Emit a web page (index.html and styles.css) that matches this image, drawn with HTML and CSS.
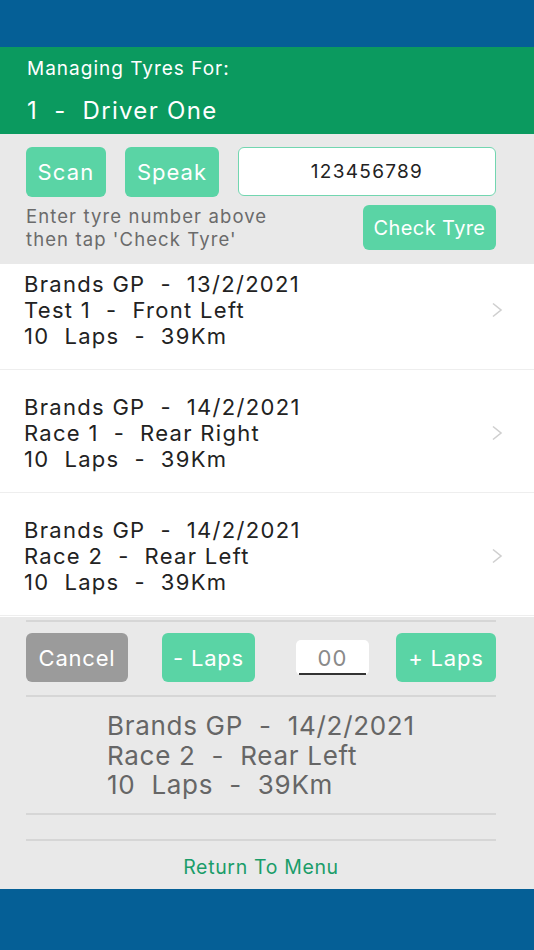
FILE: index.html
```html
<!DOCTYPE html>
<html lang="en">
<head>
<meta charset="utf-8">
<title>Managing Tyres</title>
<link rel="stylesheet" href="styles.css">
</head>
<body>
<div class="app">
  <div class="statusbar"></div>
  <header class="header">
    <div class="header-label">Managing Tyres For:</div>
    <div class="header-driver">1  -  Driver One</div>
  </header>
  <section class="controls">
    <div class="controls-row">
      <button class="btn btn-scan">Scan</button>
      <button class="btn btn-speak">Speak</button>
      <div class="tyre-input">123456789</div>
    </div>
    <div class="controls-row controls-row-second">
      <div class="helper">Enter tyre number above<br>then tap 'Check Tyre'</div>
      <button class="btn btn-check">Check Tyre</button>
    </div>
  </section>
  <section class="list">
    <div class="list-inner">
      <div class="row">
        <div class="row-text">Brands GP  -  13/2/2021
Test 1  -  Front Left
10  Laps  -  39Km</div>
        <svg class="chevron" width="12" height="16" viewBox="0 0 12 16"><polyline points="2,1.5 10,8 2,14.5" fill="none" stroke="#cfcfcf" stroke-width="1.6"/></svg>
      </div>
      <div class="row">
        <div class="row-text">Brands GP  -  14/2/2021
Race 1  -  Rear Right
10  Laps  -  39Km</div>
        <svg class="chevron" width="12" height="16" viewBox="0 0 12 16"><polyline points="2,1.5 10,8 2,14.5" fill="none" stroke="#cfcfcf" stroke-width="1.6"/></svg>
      </div>
      <div class="row">
        <div class="row-text">Brands GP  -  14/2/2021
Race 2  -  Rear Left
10  Laps  -  39Km</div>
        <svg class="chevron" width="12" height="16" viewBox="0 0 12 16"><polyline points="2,1.5 10,8 2,14.5" fill="none" stroke="#cfcfcf" stroke-width="1.6"/></svg>
      </div>
    </div>
  </section>
  <section class="panel">
    <div class="rule rule-top"></div>
    <div class="laps-row">
      <button class="btn btn-cancel">Cancel</button>
      <button class="btn btn-minus">- Laps</button>
      <div class="laps-input">00</div>
      <button class="btn btn-plus">+ Laps</button>
    </div>
    <div class="rule"></div>
    <div class="selected">Brands GP  -  14/2/2021
Race 2  -  Rear Left
10  Laps  -  39Km</div>
    <div class="rule"></div>
    <div class="spacer"></div>
    <div class="rule"></div>
    <div class="return">Return To Menu</div>
  </section>
  <div class="footer"></div>
</div>
</body>
</html>
```
FILE: styles.css
```css
* { box-sizing: border-box; }
html, body { margin: 0; padding: 0; }
body {
  font-family: Inter, Roboto, "Noto Sans", "Liberation Sans", sans-serif;
  background: #e9e9e9;
}
.app {
  width: 534px;
  height: 950px;
  display: flex;
  flex-direction: column;
  overflow: hidden;
}
.statusbar { height: 47px; background: #055f96; flex: none; }
.header {
  height: 87px;
  flex: none;
  background: #0b9a5f;
  color: #fff;
  padding: 11px 27px 0;
}
.header-label { font-size: 19px; line-height: 22px; letter-spacing: 1px; }
.header-driver { font-size: 24px; line-height: 30px; margin-top: 16px; white-space: pre; letter-spacing: 1.3px; }

.controls {
  height: 130px;
  flex: none;
  background: #e9e9e9;
  padding: 13px 38px 0 26px;
}
.controls-row { display: flex; align-items: flex-start; }
.controls-row-second { margin-top: 8px; justify-content: space-between; }

.btn {
  font-family: inherit;
  border: none;
  border-radius: 6px;
  color: #fff;
  background: #5ad4a5;
  padding: 0;
  cursor: pointer;
}
.btn-scan { width: 80px; height: 50px; font-size: 22px; letter-spacing: 1.2px; }
.btn-speak { width: 94px; height: 50px; font-size: 22px; margin-left: 19px; letter-spacing: 1px; }
.tyre-input {
  margin-left: 19px;
  flex: 1;
  height: 49px;
  background: #fff;
  border: 1.5px solid #72d6b0;
  border-radius: 6px;
  display: flex;
  align-items: center;
  justify-content: center;
  font-size: 19px;
  color: #222;
  letter-spacing: 1.3px;
}
.helper {
  font-size: 18.5px;
  line-height: 23px;
  color: #6b6b6b;
  letter-spacing: 1.1px;
}
.btn-check { width: 133px; height: 45px; font-size: 20px; letter-spacing: 0.4px; }

.list {
  height: 353px;
  flex: none;
  background: #fff;
  overflow: hidden;
}
.list-inner { margin-top: -17px; }
.row {
  display: flex;
  align-items: center;
  justify-content: space-between;
  padding: 24px 31px 20px 24px;
  border-bottom: 1px solid #eeeeee;
}
.row-text {
  white-space: pre;
  font-size: 22px;
  line-height: 26px;
  color: #222;
  letter-spacing: 1.3px;
}
.chevron { display: block; flex: none; }

.panel {
  flex: 1;
  background: #e9e9e9;
  padding: 3px 38px 0 26px;
  display: flex;
  flex-direction: column;
}
.rule { height: 2px; background: #d6d6d6; flex: none; }
.laps-row {
  display: flex;
  align-items: center;
  margin-top: 11px;
  height: 49px;
}
.btn-cancel { width: 102px; height: 49px; font-size: 22px; background: #9b9b9b; letter-spacing: 0.8px; }
.btn-minus { width: 93px; height: 49px; font-size: 22px; margin-left: 34px; letter-spacing: 0.8px; }
.laps-input {
  width: 73px;
  height: 35px;
  margin-left: 41px;
  background: #fff;
  border-radius: 5px;
  display: flex;
  align-items: center;
  justify-content: center;
  font-size: 22px;
  color: #8a8a8a;
  letter-spacing: 1px;
  position: relative;
}
.laps-input::after {
  content: "";
  position: absolute;
  left: 3px;
  right: 3px;
  bottom: 0;
  height: 2px;
  background: #333;
}
.btn-plus { width: 100px; height: 49px; font-size: 22px; margin-left: 27px; letter-spacing: 0.8px; }
.laps-row + .rule { margin-top: 13px; }

.selected {
  white-space: pre;
  font-size: 26px;
  line-height: 29.5px;
  color: #666;
  letter-spacing: 0.7px;
  padding: 14px 0 13px 81px;
}
.spacer { height: 24px; flex: none; }
.return {
  text-align: center;
  font-size: 19.5px;
  color: #1a9d69;
  margin-top: 15px;
  line-height: 22px;
  letter-spacing: 0.65px;
}
.footer { height: 61px; background: #055f96; flex: none; }
```
